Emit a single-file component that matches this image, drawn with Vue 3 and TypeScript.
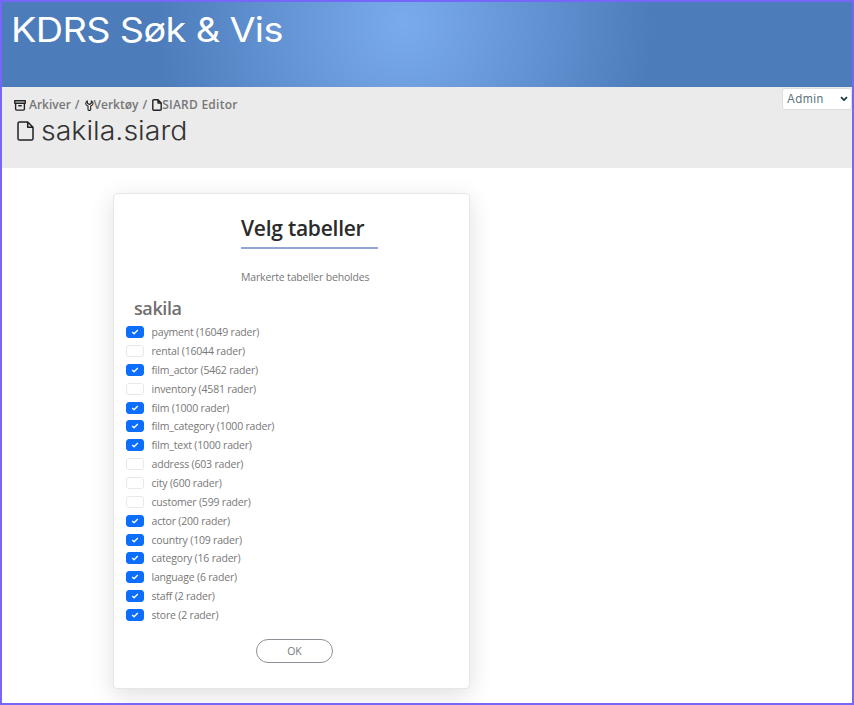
<script setup lang="ts">
import { ref } from 'vue'

interface TableRow {
  name: string
  rows: number
  keep: boolean
}

const role = ref('Admin')

const tables = ref<TableRow[]>([
  { name: 'payment', rows: 16049, keep: true },
  { name: 'rental', rows: 16044, keep: false },
  { name: 'film_actor', rows: 5462, keep: true },
  { name: 'inventory', rows: 4581, keep: false },
  { name: 'film', rows: 1000, keep: true },
  { name: 'film_category', rows: 1000, keep: true },
  { name: 'film_text', rows: 1000, keep: true },
  { name: 'address', rows: 603, keep: false },
  { name: 'city', rows: 600, keep: false },
  { name: 'customer', rows: 599, keep: false },
  { name: 'actor', rows: 200, keep: true },
  { name: 'country', rows: 109, keep: true },
  { name: 'category', rows: 16, keep: true },
  { name: 'language', rows: 6, keep: true },
  { name: 'staff', rows: 2, keep: true },
  { name: 'store', rows: 2, keep: true },
])
</script>

<template>
  <div class="page">
    <header class="banner">
      <h1>KDRS Søk &amp; Vis</h1>
    </header>

    <section class="subheader">
      <div class="location">
        <nav class="crumbs">
          <svg class="i-archive" viewBox="0 0 12 11"><path d="M.75.75h10.5v2.5H.75zM1.6 3.4v5.7q0 1 1 1h6.8q1 0 1-1V3.4M4.3 5.7h3.4" /></svg>
          <a>Arkiver</a>
          <span class="slash">/</span>
          <svg class="i-tools" viewBox="0 0 9 11"><path d="M2.4.9Q.7 1.7.7 3.4q0 1.7 2.3 2.6v3.6q0 .8.8.8h1.1q.8 0 .8-.8V6Q8 5.100 8 3.400 8 1.700 6.300.9v2.300l-1.900 1.300-2-1.300z" /></svg>
          <a>Verktøy</a>
          <span class="slash">/</span>
          <svg class="i-file" viewBox="0 0 10 12"><path d="M6 .8H1.8q-1 0-1 1v8.4q0 1 1 1h6.4q1 0 1-1V4zM6 .8V4h3.2" /></svg>
          <a class="current">SIARD Editor</a>
        </nav>
        <h2>
          <svg viewBox="0 0 17 20"><path d="M10.7 1H2.6Q1 1 1 2.6v14.8Q1 19 2.6 19h11.8q1.600 0 1.600-1.600V6.300zM10.700 1v5.300H16" /></svg>
          <span>sakila.siard</span>
        </h2>
      </div>
      <label class="role">
        <select v-model="role"><option>Admin</option></select>
        <svg viewBox="0 0 8 6"><path d="M1 1.2l3 3 3-3" /></svg>
      </label>
    </section>

    <main>
      <form class="card" @submit.prevent>
        <div class="intro">
          <h3>Velg tabeller</h3>
          <p>Markerte tabeller beholdes</p>
        </div>
        <h4>sakila</h4>
        <ul>
          <li v-for="table in tables" :key="table.name">
            <label>
              <input v-model="table.keep" type="checkbox" />
              <span class="box" :class="{ checked: table.keep }">
                <svg v-if="table.keep" viewBox="0 0 8 6"><path d="M1.2 3l1.9 1.8L6.8 1.1" /></svg>
              </span>
              <span>{{ table.name }} ({{ table.rows }} rader)</span>
            </label>
          </li>
        </ul>
        <button type="submit">OK</button>
      </form>
    </main>
  </div>
</template>

<style>
body {
  margin: 0;
  background: #fff;
}
</style>

<style scoped>
* {
  box-sizing: border-box;
}
.page {
  height: 705px;
  border: 2px solid #7666fa;
  background: #fff;
  overflow: hidden;
  display: flex;
  flex-direction: column;
  font-family: "Open Sans", "Noto Sans", sans-serif;
  color: #777;
}
h1, h2, h3, h4, p, ul {
  margin: 0;
  padding: 0;
  font-weight: 400;
}
svg {
  fill: none;
  stroke: #222;
  stroke-width: 1.4;
  stroke-linejoin: round;
  flex: none;
}
.banner {
  height: 85px;
  flex: none;
  padding: 6px 0 0 9px;
  background: radial-gradient(circle at 403px 22px, #7aabec 0, #4c7cba 250px);
}
h1 {
  width: max-content;
  font: 400 34.5px/43px "Inter", sans-serif;
  letter-spacing: -0.6px;
  transform: scaleX(1.098);
  transform-origin: 0 50%;
  color: #fff;
  white-space: nowrap;
}
.subheader {
  height: 81px;
  flex: none;
  display: flex;
  justify-content: space-between;
  background: #ebebeb;
}
.location {
  padding: 9px 0 0 12px;
}
.crumbs {
  display: flex;
  align-items: center;
  height: 18px;
  font-size: 12px;
  font-weight: 600;
  line-height: 18px;
  white-space: nowrap;
}
.current {
  letter-spacing: 0.25px;
}
.i-archive {
  width: 12px;
  height: 11px;
  margin-right: 3px;
}
.i-tools {
  width: 9px;
  height: 11px;
  stroke-width: 1.1;
}
.i-file {
  width: 10px;
  height: 12px;
}
.slash {
  margin: 0 5px 0 4px;
}
h2 {
  display: flex;
  align-items: center;
  gap: 7px;
  height: 34px;
  padding-left: 3px;
  font: 300 26px/34px "Inter", sans-serif;
  color: #333;
}
h2 span {
  transform: scaleX(1.096);
  transform-origin: 0 50%;
}
h2 svg {
  width: 17px;
  height: 20px;
  stroke-width: 1.5;
}
.role {
  display: flex;
  align-items: center;
  justify-content: space-between;
  width: 70px;
  height: 22px;
  margin-top: 1px;
  padding: 0 3px 0 4px;
  border: 1px solid #dedede;
  border-radius: 3px;
  background: #fff;
}
.role select {
  appearance: none;
  border: 0;
  padding: 0;
  background: none;
  font: 400 11.5px/18px "Inter", sans-serif;
  letter-spacing: 0.4px;
  color: #60757b;
}
.role svg {
  width: 8px;
  height: 6px;
  stroke: #183c42;
  stroke-width: 1.7;
}
main {
  padding: 25px 0 0 111px;
}
.card {
  display: flex;
  flex-direction: column;
  width: 357px;
  height: 496px;
  padding: 19px 12px 0;
  border: 1px solid #e6e6e6;
  border-radius: 4px;
  background: #fff;
  box-shadow: 0 6px 24px rgba(0, 0, 0, 0.13);
}
.intro {
  width: 137px;
  margin-left: 115px;
  white-space: nowrap;
}
h3 {
  height: 36px;
  border-bottom: 2px solid #95a5d6;
  font-size: 21px;
  font-weight: 600;
  line-height: 31px;
  letter-spacing: -0.25px;
  color: #2b2b2b;
}
p {
  margin-top: 19px;
  font-size: 10.5px;
  line-height: 18px;
  letter-spacing: -0.17px;
}
h4 {
  margin: 9px 0 0 8px;
  font-size: 18px;
  font-weight: 600;
  line-height: 26px;
  letter-spacing: -0.4px;
  color: #707070;
}
ul {
  margin-top: 1.75px;
  list-style: none;
}
li label {
  display: flex;
  align-items: center;
  gap: 7.5px;
  height: 18.87px;
  font-size: 10.5px;
  line-height: 18px;
  letter-spacing: -0.19px;
  white-space: nowrap;
}
input {
  position: absolute;
  opacity: 0;
  width: 17px;
  height: 11px;
  margin: 0;
}
.box {
  display: flex;
  align-items: center;
  justify-content: center;
  width: 18px;
  height: 12px;
  border: 1px solid #e8e8e8;
  border-radius: 3px;
  background: #fff;
}
.box.checked {
  border-color: #0d6efd;
  background: #0d6efd;
}
.box svg {
  width: 8px;
  height: 6px;
  stroke: #fff;
}
button {
  width: 77px;
  height: 24px;
  margin: 14px 0 0 130px;
  padding: 0;
  border: 1px solid #8b9096;
  border-radius: 12px;
  background: #fff;
  font: 400 10.5px/20px "Open Sans", sans-serif;
  color: #737a80;
}
</style>
